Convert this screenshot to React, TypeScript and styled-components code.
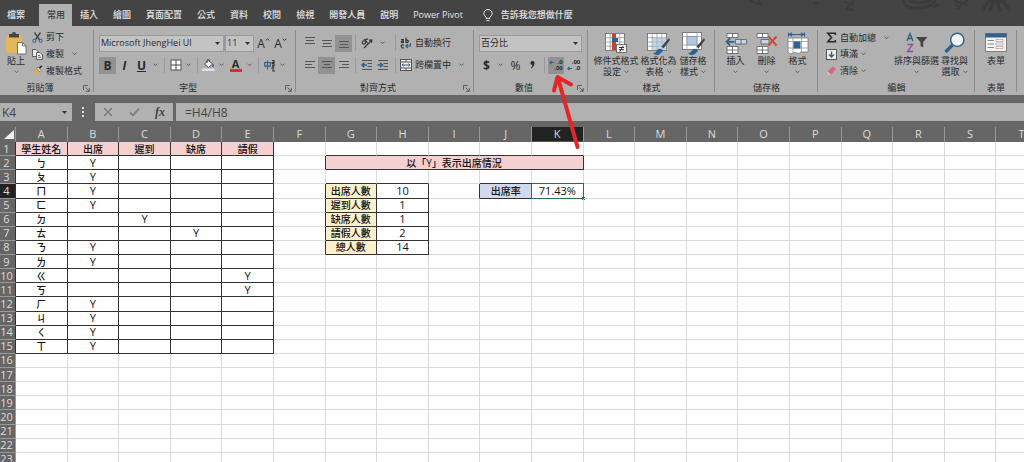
import React from 'react';
import styled, { createGlobalStyle, css } from 'styled-components';

const GlobalStyle = createGlobalStyle`
  * { box-sizing: border-box; }
  body {
    margin: 0;
    background: #666;
    font-family: "Open Sans", "Noto Sans CJK TC", sans-serif;
    color: #2b2b2b;
  }
  button, input, select { font: inherit; color: inherit; }
`;

const Window = styled.div`
  position: relative;
  display: flex;
  flex-direction: column;
  height: 100vh;
  overflow: hidden;
  font-size: 9px;
  line-height: 12px;
`;

/* ---------- Tab bar ---------- */

const TabBar = styled.nav`
  display: flex;
  flex: none;
  align-items: stretch;
  height: 26px;
  padding-top: 4px;
  background: #444;
  color: #e4e4e4;
  font-weight: 500;
`;

const Tab = styled.button<{ $active?: boolean }>`
  padding: 0 7px 0 8px;
  border: 0;
  background: ${p => (p.$active ? '#b1b1b1' : 'transparent')};
  color: ${p => (p.$active ? '#3a3a3a' : 'inherit')};
  white-space: nowrap;
  &:first-child { padding: 0 14px 0 7px; }
`;

const TellMe = styled.button`
  display: flex;
  align-items: center;
  gap: 8px;
  margin-left: 13px;
  padding: 0;
  border: 0;
  background: none;
  color: inherit;
  white-space: nowrap;
`;

const Doodles = styled.svg`
  flex: none;
  width: 284px;
  height: 14px;
  margin: -4px 0 0 auto;
`;

/* ---------- Ribbon ---------- */

const Ribbon = styled.div`
  display: flex;
  flex: none;
  height: 69px;
  background: #b1b1b1;
`;

const Group = styled.section<{ $width: number }>`
  display: flex;
  flex-direction: column;
  flex: 0 0 ${p => p.$width}px;
  padding-top: 3px;
  background: linear-gradient(#8a8a8a, #8a8a8a) right center / 1px 62px no-repeat;
`;

const GroupBody = styled.div<{ $pad?: number }>`
  display: flex;
  flex: none;
  height: 50px;
  padding-left: ${p => p.$pad ?? 5}px;
`;

const GroupFooter = styled.div`
  display: flex;
  flex: 1;
  align-items: center;
  padding-top: 2px;
`;

const GroupLabel = styled.span`
  flex: 1;
  text-align: center;
`;

const Launcher = styled.button`
  display: flex;
  width: 14px;
  padding: 0 3px;
  border: 0;
  background: none;
`;

const Stack = styled.div<{ $gap?: number }>`
  display: flex;
  flex-direction: column;
  justify-content: center;
  gap: ${p => p.$gap ?? 5}px;
`;

const ToolRow = styled.div`
  display: flex;
  align-items: center;
  height: 17px;
`;

const Tool = styled.button<{ $w?: number; $on?: boolean }>`
  display: flex;
  flex: none;
  align-items: center;
  justify-content: center;
  width: ${p => p.$w ?? 17}px;
  height: 17px;
  padding: 0;
  border: 0;
  background: ${p => (p.$on ? '#929292' : 'none')};
  font-size: 12px;
  line-height: 17px;
`;

const LabelTool = styled.button`
  display: flex;
  align-items: center;
  gap: 3px;
  height: 17px;
  padding: 0;
  border: 0;
  background: none;
  white-space: nowrap;
`;

const Divider = styled.span<{ $before?: number; $after?: number }>`
  flex: none;
  width: 1px;
  height: 16px;
  margin: 0 ${p => p.$after ?? 3}px 0 ${p => p.$before ?? 3}px;
  background: #999;
`;

const BigTool = styled.button<{ $w: number }>`
  display: flex;
  flex: none;
  flex-direction: column;
  align-items: center;
  justify-content: flex-start;
  width: ${p => p.$w}px;
  padding: 3px 0 0;
  border: 0;
  background: none;
  line-height: 11px;
  white-space: nowrap;
  svg { flex: none; }
`;

const BigLabel = styled.span`
  display: flex;
  align-items: center;
  gap: 3px;
  height: 11px;
`;

const Combo = styled.label<{ $w: number }>`
  display: flex;
  flex: none;
  align-items: center;
  width: ${p => p.$w}px;
  height: 17px;
  padding-right: 3px;
  border: 1px solid #9a9a9a;
  background: #c3c3c3;
  select {
    flex: 1;
    min-width: 0;
    height: 15px;
    padding: 0 0 0 1px;
    border: 0;
    appearance: none;
    background: none;
  }
`;

/* ---------- Formula bar ---------- */

const FormulaBar = styled.div`
  display: flex;
  flex: none;
  height: 24px;
  margin-top: 8px;
  padding-bottom: 6px;
  font-size: 12px;
  color: #444;
`;

const NameBox = styled.label`
  display: flex;
  align-items: center;
  flex: none;
  width: 72px;
  padding-right: 5px;
  background: #b1b1b1;
  input {
    flex: 1;
    width: 0;
    min-width: 0;
    padding: 0 0 0 2px;
    border: 0;
    background: none;
  }
`;

const Grip = styled.svg`
  flex: none;
  width: 23px;
  height: 18px;
`;

const FormulaButtons = styled.div`
  display: flex;
  flex: none;
  width: 78px;
  margin-right: 3px;
  background: #b1b1b1;
  button { flex: 1; height: 18px; }
`;

const FormulaInput = styled.input`
  flex: 1;
  min-width: 0;
  padding: 0 9px;
  border: 0;
  background: #b1b1b1;
`;

const FxMark = styled.i`
  font-family: "Liberation Serif", serif;
  font-size: 12px;
  font-weight: bold;
`;

/* ---------- Sheet ---------- */

const SheetArea = styled.main`
  flex: 1;
  min-height: 0;
  overflow: hidden;
  background: #fff;
`;

const Sheet = styled.table`
  width: calc(100% + 32px);
  height: 340px;
  margin-left: -8px;
  table-layout: fixed;
  border-collapse: separate;
  border-spacing: 0;
  font-size: 10px;
  line-height: 12px;
  text-align: center;
  tr { height: 14px; }
  thead tr { height: 15px; }
  th, td { padding: 0; white-space: nowrap; }
`;

const RowHeadCol = styled.col`
  width: 24px;
`;

const headerCell = css<{ $on?: boolean }>`
  background: ${p => (p.$on ? '#222' : '#666')};
  color: #dcdcdc;
  font-weight: 400;
  font-size: 11px;
`;

const ColHead = styled.th<{ $on?: boolean }>`
  ${headerCell}
  border-right: 1px solid #999;
  border-bottom: 1px solid ${p => (p.$on ? '#217346' : '#666')};
`;

const RowHead = styled.th<{ $on?: boolean; $edge: boolean }>`
  ${headerCell}
  && { padding-left: 6px; }
  border-bottom: 1px solid #999;
  border-right: 1px solid ${p => (p.$edge ? '#333' : '#999')};
`;

type Tone = 'pink' | 'yellow' | 'blue' | 'plain';
const toneColor: Record<Tone, string> = {
  pink: '#f4d0d0',
  yellow: '#fdf0cb',
  blue: '#d3d9ec',
  plain: 'transparent',
};

const Cell = styled.td<{ $tone: Tone; $right: boolean; $bottom: boolean; $num: boolean }>`
  position: relative;
  background: ${p => toneColor[p.$tone]};
  border-right: 1px solid ${p => (p.$right ? '#333' : '#dadada')};
  border-bottom: 1px solid ${p => (p.$bottom ? '#333' : '#dadada')};
  color: #111;
  font-size: ${p => (p.$num ? 11 : 10)}px;
  font-weight: 500;
`;

const Selection = styled.span`
  position: absolute;
  inset: -1px;
  border: 1px solid #217346;
  &::after {
    content: "";
    position: absolute;
    right: -2px;
    bottom: -2px;
    width: 3px;
    height: 3px;
    background: #217346;
  }
`;

const PointerArrow = styled.svg`
  position: absolute;
  left: 545px;
  top: 70px;
  width: 40px;
  height: 84px;
  pointer-events: none;
`;

/* ---------- Icons ---------- */

const Caret = ({ solid }: { solid?: boolean }) =>
  solid ? (
    <svg width="5" height="3" viewBox="0 0 5 3"><path d="M0 0h5L2.5 3z" fill="#333" /></svg>
  ) : (
    <svg width="5" height="4" viewBox="0 0 5 4"><path d="M.5.7 2.5 2.7 4.5.7" fill="none" stroke="#555" strokeWidth=".9" /></svg>
  );

const SizeMark = ({ down }: { down?: boolean }) => (
  <svg width="5" height="10" viewBox="0 0 5 10">
    <path d={down ? 'M.7.8 2.500 2.500 4.300.8' : 'M.7 2.500 2.500.8 4.300 2.500'} fill="none" stroke="#333" strokeWidth="1" />
  </svg>
);

const LauncherIcon = () => (
  <svg width="7" height="7" viewBox="0 0 7 7" fill="none" stroke="#555" strokeWidth=".9">
    <path d="M.5 5V.5H5M2.5 2.5l3.5 3.5M6.3 3v3.3H3" />
  </svg>
);

const PasteIcon = () => (
  <svg width="22" height="23" viewBox="0 0 22 23">
    <rect x="1" y="3" width="16" height="18" rx="1" fill="#e3b75e" />
    <path d="M4 2h3a2 2 0 0 1 4 0h3v3.500H4z" fill="#444" />
    <path d="M12.500 10.500h5l3.500 3.500v8h-8.500z" fill="#fff" stroke="#555" strokeWidth=".8" />
    <path d="M17.500 10.500v3.500H21" fill="none" stroke="#555" strokeWidth=".8" />
  </svg>
);
const CutIcon = () => (
  <svg width="11" height="11" viewBox="0 0 11 11" fill="none">
    <path d="M2.500.5 7.800 8M8.500.5 3.200 8" stroke="#444" strokeWidth="1.300" />
    <circle cx="2.300" cy="8.800" r="1.600" stroke="#2e618f" /><circle cx="8.700" cy="8.800" r="1.600" stroke="#2e618f" />
  </svg>
);
const CopyIcon = () => (
  <svg width="11" height="11" viewBox="0 0 11 11" fill="#eee" stroke="#444" strokeWidth=".8">
    <path d="M.5.5h3.500l2 2v5H.5z" /><path d="M4.500 3.500H8l2.500 2.500v4.500h-6z" /><path d="M6 6.500h2M6 8.300h3" />
  </svg>
);
const BrushIcon = () => (
  <svg width="11" height="11" viewBox="0 0 11 11">
    <path d="M1 4.500 5 3l3 3.500L5.500 10z" fill="#e2a84a" /><path d="m4.500 3 1.700-1 2.800 3.300-1.500 1.500z" fill="#eee" stroke="#444" strokeWidth=".5" /><path d="m7.300 3.200 2.500-2.400" stroke="#333" strokeWidth="1.800" />
  </svg>
);
const BordersIcon = () => (
  <svg width="12" height="12" viewBox="0 0 12 12"><rect x="1" y="1" width="10" height="10" fill="#fff" stroke="#555" /><path d="M6 1v10M1 6h10" stroke="#444" /></svg>
);
const FillIcon = () => (
  <svg width="13" height="12" viewBox="0 0 13 12">
    <path d="m2.500 5 4-3.500 4 3.500-4 3.500z" fill="#eee" stroke="#444" strokeWidth=".9" /><path d="M5 4V1.500a1.200 1.200 0 0 1 2.400 0V3" fill="none" stroke="#444" strokeWidth=".8" />
    <path d="M10.500 4q2 2 1.300 4-1.300.5-1.500-1z" fill="#2e618f" /><rect x="0" y="9.500" width="12.500" height="2.500" fill="#d9e1ee" />
  </svg>
);
const FontColorMark = styled.span`
  width: 12px;
  border-bottom: 3px solid #e0282e;
  font-size: 11px;
  font-weight: 700;
  line-height: 10px;
`;
const PhoneticMark = () => (
  <svg width="12" height="13" viewBox="0 0 12 13">
    <path d="M.7 3.500h5.600v3.600H.7zM3.500 1.500v9" fill="none" stroke="#2e618f" strokeWidth="1.200" />
    <path d="M8 1.500h2v3H8.200q-.8-1.500 1.800-1.500M8 6.200h2.300L8 9h2.500M9 10v2h2" fill="none" stroke="#333" strokeWidth="1.200" />
  </svg>
);
const Lines = ({ rows }: { rows: number[][] }) => (
  <svg width="12" height="12" viewBox="0 0 12 12">
    {rows.map(([x1, x2, y], i) => <path key={i} d={`M${x1} ${y + 0.5}H${x2}`} stroke="#555" />)}
  </svg>
);
const OrientIcon = () => (
  <svg width="12" height="12" viewBox="0 0 12 12" fill="none" stroke="#333" strokeWidth="1.100">
    <circle cx="3" cy="5.500" r="1.700" /><path d="m3 2 4.500 5M5.500 5a1.500 1.500 0 1 1 1.500-2.500M3 11l7.500-7.500M8 3.200l2.800-.3-.2 2.800" />
  </svg>
);
const WrapIcon = () => (
  <svg width="12" height="12" viewBox="0 0 12 12" fill="none" strokeWidth="1.200">
    <path d="M1 2.500h2.300V5.300H1.500q-1-1.400 1.800-1.400M6 .5v4.800h1.700q2-1.600-1.700-2.600" stroke="#333" />
    <path d="M4 8q-3-.5-2.700 1.500T4 10.700" stroke="#333" /><path d="M10.500 6v3H6M8 7 5.800 9 8 11" stroke="#2e618f" />
  </svg>
);
const IndentIcon = ({ out }: { out?: boolean }) => (
  <svg width="12" height="12" viewBox="0 0 12 12" fill="none">
    <path d="M1 1.500h10M6.500 4.500H11M6.500 7.500H11M1 10.500h10" stroke="#555" />
    <path d={out ? 'M6 6H1M3.300 3.800 1 6l2.300 2.200' : 'M.5 6h5M3.200 3.800 5.500 6 3.200 8.200'} stroke="#2e618f" strokeWidth="1.500" />
  </svg>
);
const MergeIcon = () => (
  <svg width="12" height="12" viewBox="0 0 12 12"><rect x=".5" y=".5" width="11" height="11" fill="#eee" stroke="#555" />
    <path d="M.5 3h11M.5 9h11M6 .5V3M6 9v2.500" stroke="#555" /><path d="M2 6h8M3.500 4.500 2 6l1.500 1.500M8.500 4.500 10 6 8.500 7.500" fill="none" stroke="#2e618f" />
  </svg>
);

const DecimalMark = styled.span`
  display: grid;
  grid-template-columns: 5px auto;
  align-items: center;
  justify-items: end;
  font-size: 6px;
  font-weight: 700;
  line-height: 6px;
  span { grid-column: 2; }
`;
const BlueArrow = () => (
  <svg width="5" height="5" viewBox="0 0 5 5"><path d="M5 2.500H1M2.500.8.8 2.500l1.700 1.700" fill="none" stroke="#2e618f" strokeWidth="1.100" /></svg>
);
const CommaMark = () => (
  <svg width="5" height="8" viewBox="0 0 5 8"><path d="M2.500 0a2 2 0 0 1 2 2.200Q4.500 5.500 1.500 7.500L.8 6.800Q2.500 5.500 2.500 4.100A2 2 0 0 1 2.500 0z" fill="#2b2b2b" /></svg>
);

const GridBase = () => (
  <>
    <rect x=".5" y="1.500" width="19" height="17" fill="#fff" stroke="#666" strokeWidth=".8" />
    <path d="M.5 5.700h19M.5 10h19M.5 14.200h19M5.200 1.500v17M10 1.500v17M14.800 1.500v17" stroke="#888" strokeWidth=".7" />
  </>
);
const StyleBrush = () => (
  <>
    <path d="m22 6-7.500 8.500 2 2L23 8z" fill="#444" /><path d="M6 21q3 0 4-2.500t4-1.500 1 3-4 3q-3 .5-5-2z" fill="#2e618f" />
  </>
);
const ConditionalIcon = () => (
  <svg width="22" height="23" viewBox="0 0 22 23">
    <GridBase />
    <rect x="7" y="2" width="4" height="4" fill="#c0462f" /><rect x="7" y="6" width="6" height="4" fill="#2e618f" /><rect x="7" y="10" width="4" height="8" fill="#c0462f" />
    <rect x="11.500" y="12.500" width="10" height="8" fill="#eee" stroke="#555" strokeWidth=".8" />
    <path d="M14 15.500h5M14 17.700h5M18 14l-3 5.500" stroke="#222" strokeWidth=".9" />
  </svg>
);
const TableStyleIcon = () => (
  <svg width="23" height="23" viewBox="0 0 23 23"><GridBase /><rect x="5.500" y="6" width="14" height="12" fill="#a9c1dc" opacity=".7" /><StyleBrush /></svg>
);
const CellStyleIcon = () => (
  <svg width="23" height="23" viewBox="0 0 23 23">
    <rect x=".5" y=".5" width="19" height="17" fill="#fff" stroke="#666" strokeWidth=".8" />
    <path d="M5 .5v17M15 .5v17M.5 4.500h19M.5 13h19" stroke="#999" strokeWidth=".7" />
    <rect x="5" y="4.500" width="10" height="8.500" fill="#b4c9e0" stroke="#6d8cae" strokeWidth=".7" /><StyleBrush />
  </svg>
);
const InsertIcon = () => (
  <svg width="22" height="23" viewBox="0 0 22 23" fill="#fff" stroke="#666" strokeWidth=".9">
    <path d="M2 1.500h11v4H2zM7.500 1.500v4M2 14.500h11v7H2zM7.500 14.500v7M2 18h11" />
    <path d="M10.500 7.500h11v4.500h-11zM16 7.500V12" fill="#c4d4e6" /><path d="M9.500 9.800H1.500M5 6.300 1.500 9.800 5 13.300" fill="none" stroke="#2e618f" strokeWidth="1.800" />
  </svg>
);
const DeleteIcon = () => (
  <svg width="22" height="23" viewBox="0 0 22 23" fill="#fff" stroke="#666" strokeWidth=".9">
    <path d="M1 1.500h11v4H1zM6.500 1.500v4M1 14.500h11v7H1zM6.500 14.500v7M1 18h11" />
    <path d="M5 7.500h8v4.500H5z" fill="#c4d4e6" /><path d="m12.500 4.500 8 9M20.500 4.500l-8 9" fill="none" stroke="#cf4a30" strokeWidth="1.900" />
  </svg>
);
const FormatIcon = () => (
  <svg width="22" height="23" viewBox="0 0 22 23">
    <path d="M1.500.5v4M17.500.5v4M2.500 2.500h14M5 .7 2.700 2.500 5 4.300M14 .7l2.300 1.800L14 4.300" fill="none" stroke="#2e618f" strokeWidth="1.200" />
    <path d="M1 6h20v14h-7l-2 1.500-4-1-5 1.500-2-2z" fill="#fff" stroke="#777" strokeWidth=".8" /><path d="M6 6v15M14.500 6v14M1 9.500h20M1 16h20" stroke="#888" strokeWidth=".7" />
    <rect x="6.500" y="9.500" width="7" height="7" fill="#2e618f" />
  </svg>
);
const SumIcon = () => (
  <svg width="11" height="11" viewBox="0 0 11 11"><path d="M9.300 3V1.200H1.800L5.500 5.500 1.800 9.800h7.500V8" fill="none" stroke="#2b2b2b" strokeWidth="1.600" /></svg>
);
const FillDownIcon = () => (
  <svg width="11" height="11" viewBox="0 0 11 11"><rect x=".5" y=".5" width="10" height="10" fill="#eee" stroke="#555" /><path d="M5.500 2.500v5.500M3 5.500 5.500 8 8 5.500" fill="none" stroke="#2e618f" strokeWidth="1.400" /></svg>
);
const EraserIcon = () => (
  <svg width="11" height="11" viewBox="0 0 11 11"><path d="m1.500 6.500 5-5 3.500 2.500-5 5.500z" fill="#d9667a" /><path d="m1.500 6.500 3.500 3-1.500.8L.8 8.500z" fill="#eab3bd" /></svg>
);
const SortIcon = () => (
  <svg width="22" height="23" viewBox="0 0 22 23" fill="none">
    <path d="m1 9 3-7.500L7 9M2 6.500h4" stroke="#2e618f" strokeWidth="1.300" /><path d="M1.500 12.500h5.200l-5.200 7h5.500" stroke="#8d4aa8" strokeWidth="1.300" />
    <path d="M10 5h11.500l-4.300 5v5.500l-2.700-1.500v-4z" fill="#444" />
  </svg>
);
const FindIcon = () => (
  <svg width="22" height="23" viewBox="0 0 22 23"><path d="m8.500 13-7 7" stroke="#2e618f" strokeWidth="3.200" /><circle cx="13.300" cy="7.800" r="6.600" fill="#f4f4f4" stroke="#2e618f" strokeWidth="1.400" /></svg>
);
const FormIcon = () => (
  <svg width="22" height="23" viewBox="0 0 22 23"><rect x=".5" y="1.500" width="21" height="18" fill="#f2f2f2" stroke="#666" strokeWidth=".8" /><path d="M.5 1.500h21V5.500H.5z" fill="#2e618f" />
    <path d="M2.500 8.500H9M2.500 12H9M2.500 15.500H9" stroke="#888" /><path d="M11 7.500h7v2h-7zM11 11h7v2h-7zM11 14.500h7v2h-7z" fill="#fff" stroke="#b08080" strokeWidth=".6" />
  </svg>
);
const BulbIcon = () => (
  <svg width="10" height="13" viewBox="0 0 10 13" fill="none" stroke="#e4e4e4" strokeWidth="1">
    <path d="M3.200 9.500V8.200Q.8 6.800.8 4.700a4.200 4.200 0 0 1 8.400 0Q9.200 6.800 6.800 8.200V9.500zM3.500 11.500h3" />
  </svg>
);

/* ---------- Data ---------- */

const TABS = ['檔案', '常用', '插入', '繪圖', '頁面配置', '公式', '資料', '校閱', '檢視', '開發人員', '說明', 'Power Pivot'];
const COLUMNS = 'ABCDEFGHIJKLMNOPQRST'.split('');
const ROWS = Array.from({ length: 23 }, (_, i) => i + 1);

type CellData = { text: string; tone?: Tone; num?: boolean };
const cells: Record<string, CellData> = {};

['學生姓名', '出席', '遲到', '缺席', '請假'].forEach((text, i) => {
  cells[COLUMNS[i] + '1'] = { text, tone: 'pink' };
});
const STUDENTS: [string, string][] = [
  ['ㄅ', 'B'], ['ㄆ', 'B'], ['ㄇ', 'B'], ['ㄈ', 'B'], ['ㄉ', 'C'], ['ㄊ', 'D'], ['ㄋ', 'B'],
  ['ㄌ', 'B'], ['ㄍ', 'E'], ['ㄎ', 'E'], ['ㄏ', 'B'], ['ㄐ', 'B'], ['ㄑ', 'B'], ['ㄒ', 'B'],
];
STUDENTS.forEach(([name, mark], i) => {
  cells['A' + (i + 2)] = { text: name };
  cells[mark + (i + 2)] = { text: 'Y', num: true };
});
const TOTALS: [string, string][] = [['出席人數', '10'], ['遲到人數', '1'], ['缺席人數', '1'], ['請假人數', '2'], ['總人數', '14']];
TOTALS.forEach(([label, value], i) => {
  cells['G' + (i + 4)] = { text: label, tone: 'yellow' };
  cells['H' + (i + 4)] = { text: value, num: true };
});
cells.G2 = { text: '以「Y」表示出席情況', tone: 'pink' };
cells.J4 = { text: '出席率', tone: 'blue' };
cells.K4 = { text: '71.43%', num: true };

/* Ranges with a drawn border: [first column, last column, first row, last row]. */
const BOXED = [[0, 4, 1, 15], [6, 10, 2, 2], [6, 7, 4, 8], [9, 10, 4, 4]];
const boxed = (c: number, r: number) => BOXED.some(([a, b, t, u]) => c >= a && c <= b && r >= t && r <= u);

function SheetRow({ row }: { row: number }) {
  return (
    <tr>
      <RowHead scope="row" $on={row === 4} $edge={boxed(0, row)}>{row}</RowHead>
      {COLUMNS.map((name, c) => {
        if (row === 2 && c > 6 && c <= 10) return null;
        const merged = row === 2 && c === 6;
        const data = cells[name + row];
        return (
          <Cell
            key={name}
            colSpan={merged ? 5 : 1}
            $tone={data?.tone ?? 'plain'}
            $num={!!data?.num}
            $right={boxed(c, row) || boxed(c + 1, row)}
            $bottom={boxed(c, row) || boxed(c, row + 1)}
          >
            {data?.text}
            {name + row === 'K4' && <Selection />}
          </Cell>
        );
      })}
    </tr>
  );
}

const Big = ({ w, icon, lines, caret }: { w: number; icon: React.ReactNode; lines: string[]; caret?: boolean }) => (
  <BigTool $w={w}>
    {icon}
    {lines.map((l, i) => (
      <BigLabel key={l}>{l}{caret && lines.length > 1 && i === 1 && <Caret />}</BigLabel>
    ))}
    {caret && lines.length === 1 && <BigLabel><Caret /></BigLabel>}
  </BigTool>
);

const Footer = ({ label, launcher }: { label: string; launcher?: boolean }) => (
  <GroupFooter>
    <GroupLabel>{label}</GroupLabel>
    {launcher && <Launcher aria-label={label}><LauncherIcon /></Launcher>}
  </GroupFooter>
);

export default function App() {
  return (
    <Window>
      <GlobalStyle />
      <TabBar>
        {TABS.map((t, i) => <Tab key={t} $active={i === 1}>{t}</Tab>)}
        <TellMe><BulbIcon />告訴我您想做什麼</TellMe>
        <Doodles viewBox="0 0 284 14" fill="none" stroke="#3b3b3b" strokeWidth="2" strokeLinecap="round">
          <path d="M11 1l8 3M18 0l4 5M75 3h2M105 2l8 3M113 1l-6 7M106 9l7 1" />
          <path d="M163 0q2 7 10 8h10q8-1 12-7M170 1q10 4 20 0M194 7l4-2" strokeWidth="3" />
          <path d="M215 1l12 4M228 0l-10 8M216 4l3 4" />
          <path d="M244 8q2-5 7-7M250 10l4-9M257 0l3 10M262 1q4 3 6 7M248 1h16" strokeWidth="3" />
        </Doodles>
      </TabBar>

      <Ribbon>
        <Group $width={94}>
          <GroupBody $pad={0}>
            <Big w={32} icon={<PasteIcon />} lines={['貼上']} caret />
            <Stack $gap={0}>
              <LabelTool><CutIcon />剪下</LabelTool>
              <LabelTool><CopyIcon />複製<Tool as="span" $w={15}><Caret /></Tool></LabelTool>
              <LabelTool><BrushIcon />複製格式</LabelTool>
            </Stack>
          </GroupBody>
          <Footer label="剪貼簿" launcher />
        </Group>

        <Group $width={202}>
          <GroupBody>
            <Stack>
              <ToolRow>
                <Combo $w={125}>
                  <select aria-label="字型"><option>Microsoft JhengHei UI</option></select>
                  <Caret solid />
                </Combo>
                <Divider $before={0} $after={0} />
                <Combo $w={29}>
                  <select aria-label="字型大小"><option>11</option></select>
                  <Caret solid />
                </Combo>
                <Tool $w={19}>A<SizeMark /></Tool>
                <Tool $w={15}>A<SizeMark down /></Tool>
              </ToolRow>
              <ToolRow>
                <Tool $on><b>B</b></Tool>
                <Tool><b><i>I</i></b></Tool>
                <Tool><b><u>U</u></b></Tool>
                <Tool $w={11}><Caret /></Tool>
                <Divider />
                <Tool $w={15}><BordersIcon /></Tool>
                <Tool $w={11}><Caret /></Tool>
                <Divider />
                <Tool $w={15}><FillIcon /></Tool>
                <Tool $w={11}><Caret /></Tool>
                <Tool><FontColorMark>A</FontColorMark></Tool>
                <Tool $w={11}><Caret /></Tool>
                <Divider />
                <Tool $w={15}><PhoneticMark /></Tool>
                <Tool $w={11}><Caret /></Tool>
              </ToolRow>
            </Stack>
          </GroupBody>
          <Footer label="字型" launcher />
        </Group>

        <Group $width={178}>
          <GroupBody>
            <Stack>
              <ToolRow>
                <Tool><Lines rows={[[1, 11, 0], [2, 10, 3], [1, 11, 6]]} /></Tool>
                <Tool><Lines rows={[[1, 11, 3], [2, 10, 6], [1, 11, 9]]} /></Tool>
                <Tool $on><Lines rows={[[1, 11, 4], [2, 10, 7], [1, 11, 10]]} /></Tool>
                <Divider />
                <Tool $w={15}><OrientIcon /></Tool>
                <Tool><Caret /></Tool>
                <Divider $before={4} $after={4} />
                <LabelTool><WrapIcon />自動換行</LabelTool>
              </ToolRow>
              <ToolRow>
                <Tool><Lines rows={[[1, 11, 2], [1, 8, 5], [1, 11, 8]]} /></Tool>
                <Tool $on><Lines rows={[[1, 11, 2], [3, 9, 5], [1, 11, 8]]} /></Tool>
                <Tool><Lines rows={[[1, 11, 2], [4, 11, 5], [1, 11, 8]]} /></Tool>
                <Divider />
                <Tool $w={15}><IndentIcon out /></Tool>
                <Tool><IndentIcon /></Tool>
                <Divider $before={4} $after={4} />
                <LabelTool><MergeIcon />跨欄置中<Tool as="span" $w={15}><Caret /></Tool></LabelTool>
              </ToolRow>
            </Stack>
          </GroupBody>
          <Footer label="對齊方式" launcher />
        </Group>

        <Group $width={114}>
          <GroupBody>
            <Stack>
              <ToolRow>
                <Combo $w={103}>
                  <select aria-label="數值格式"><option>百分比</option></select>
                  <Caret solid />
                </Combo>
              </ToolRow>
              <ToolRow>
                <Tool $w={15}><b>$</b></Tool>
                <Tool $w={13}><Caret /></Tool>
                <Tool>%</Tool>
                <Tool aria-label="千分位樣式"><CommaMark /></Tool>
                <Divider />
                <Tool $w={16} $on>
                  <DecimalMark><BlueArrow /><span>.0</span><span>.00</span></DecimalMark>
                </Tool>
                <Tool $w={19}>
                  <DecimalMark><span>.00</span><BlueArrow /><span>.0</span></DecimalMark>
                </Tool>
              </ToolRow>
            </Stack>
          </GroupBody>
          <Footer label="數值" launcher />
        </Group>

        <Group $width={127}>
          <GroupBody>
            <Big w={46} icon={<ConditionalIcon />} lines={['條件式格式', '設定']} caret />
            <Big w={39} icon={<TableStyleIcon />} lines={['格式化為', '表格']} caret />
            <Big w={30} icon={<CellStyleIcon />} lines={['儲存格', '樣式']} caret />
          </GroupBody>
          <Footer label="樣式" />
        </Group>

        <Group $width={103}>
          <GroupBody>
            <Big w={31} icon={<InsertIcon />} lines={['插入']} caret />
            <Big w={31} icon={<DeleteIcon />} lines={['刪除']} caret />
            <Big w={31} icon={<FormatIcon />} lines={['格式']} caret />
          </GroupBody>
          <Footer label="儲存格" />
        </Group>

        <Group $width={157}>
          <GroupBody $pad={8}>
            <Stack $gap={0}>
              <LabelTool><SumIcon />自動加總<Tool as="span" $w={15}><Caret /></Tool></LabelTool>
              <LabelTool><FillDownIcon />填滿<Caret /></LabelTool>
              <LabelTool><EraserIcon />清除<Caret /></LabelTool>
            </Stack>
            <Big w={45} icon={<SortIcon />} lines={['排序與篩選']} caret />
            <Big w={31} icon={<FindIcon />} lines={['尋找與', '選取']} caret />
          </GroupBody>
          <Footer label="編輯" />
        </Group>

        <Group $width={42}>
          <GroupBody $pad={0}>
            <Big w={42} icon={<FormIcon />} lines={['表單']} />
          </GroupBody>
          <Footer label="表單" />
        </Group>
      </Ribbon>

      <FormulaBar>
        <NameBox><input aria-label="名稱方塊" defaultValue="K4" /><Caret solid /></NameBox>
        <Grip viewBox="0 0 23 18" fill="#ddd">
          <rect x="10" y="4" width="2" height="2" /><rect x="10" y="8" width="2" height="2" /><rect x="10" y="12" width="2" height="2" />
        </Grip>
        <FormulaButtons>
          <Tool aria-label="取消">
            <svg width="10" height="10" viewBox="0 0 10 10"><path d="m1 1 8 8M9 1 1 9" stroke="#777" strokeWidth="1.200" /></svg>
          </Tool>
          <Tool aria-label="輸入">
            <svg width="11" height="10" viewBox="0 0 11 10"><path d="m1 5.500 3 3L10 1.500" fill="none" stroke="#777" strokeWidth="1.500" /></svg>
          </Tool>
          <Tool aria-label="插入函數"><FxMark>fx</FxMark></Tool>
        </FormulaButtons>
        <FormulaInput aria-label="資料編輯列" defaultValue="=H4/H8" />
      </FormulaBar>

      <SheetArea>
        <Sheet>
          <colgroup>
            <RowHeadCol />
            {COLUMNS.map(c => <col key={c} />)}
          </colgroup>
          <thead>
            <tr>
              <ColHead aria-label="全選">
                <svg width="24" height="12" viewBox="0 0 24 12" display="block"><path d="M22 2v9H12z" fill="#f2f2f2" /></svg>
              </ColHead>
              {COLUMNS.map(c => <ColHead key={c} scope="col" $on={c === 'K'}>{c}</ColHead>)}
            </tr>
          </thead>
          <tbody>
            {ROWS.map(r => <SheetRow key={r} row={r} />)}
          </tbody>
        </Sheet>
      </SheetArea>

      <PointerArrow viewBox="0 0 40 84" fill="none" stroke="#e3262b" strokeWidth="4" strokeLinecap="round" strokeLinejoin="round">
        <path d="M32.500 77 13 8M9 20.500 12.500 7 26 14.500" />
      </PointerArrow>
    </Window>
  );
}
